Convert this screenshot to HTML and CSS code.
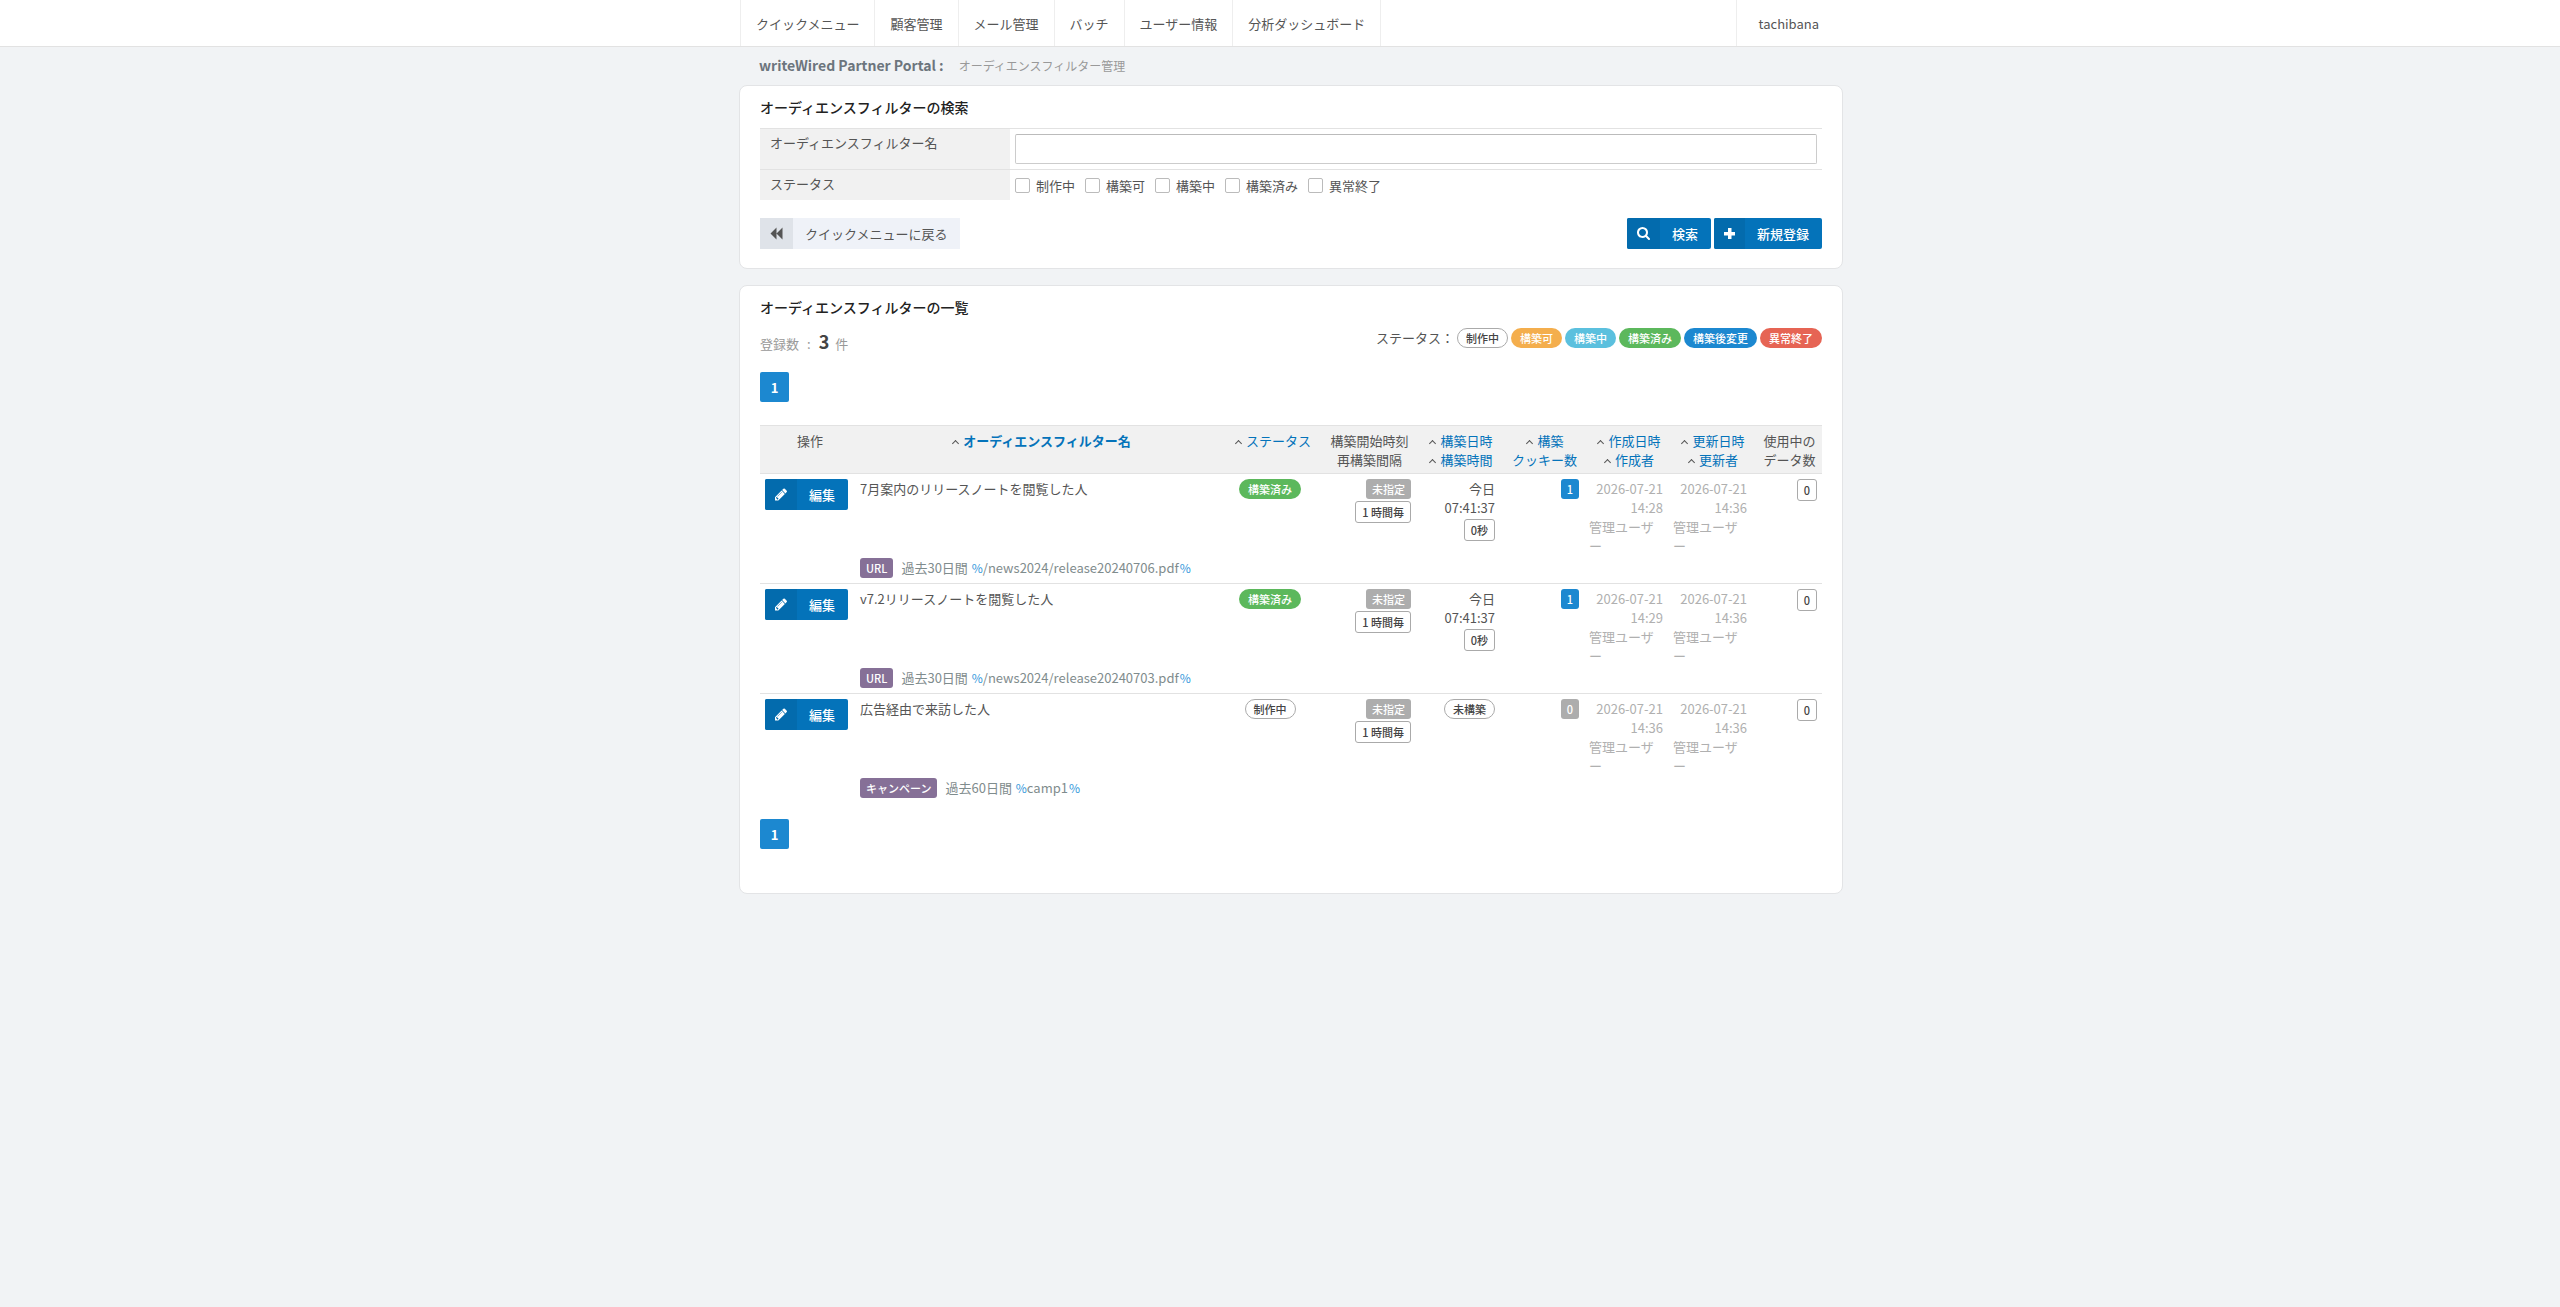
FILE: index.html
```
<!DOCTYPE html>
<html lang="ja">
<head>
  <meta charset="UTF-8">
  <meta name="viewport" content="width=device-width, initial-scale=1.0">
  <title>オーディエンスフィルター管理</title>
  <link rel="stylesheet" href="styles.css">
</head>
<body>
  <!-- icons -->
  <svg class="defs" width="0" height="0">
    <symbol id="i-search" viewBox="64 128 1664 1664"><path d="M1216 832q0-185-131.500-316.500t-316.500-131.500-316.500 131.500-131.500 316.500 131.500 316.500 316.500 131.500 316.500-131.500 131.500-316.500zm512 832q0 52-38 90t-90 38q-54 0-90-38l-343-342q-179 124-399 124-143 0-273.500-55.500t-225-150-150-225-55.500-273.500 55.500-273.500 150-225 225-150 273.500-55.500 273.500 55.500 225 150 150 225 55.500 273.500q0 220-124 399l343 343q37 37 37 90z"/></symbol>
    <symbol id="i-pencil" viewBox="128 149 1516 1516"><path d="M491 1536l91-91-235-235-91 91v107h128v128h107zm523-928q0-22-22-22-10 0-17 7l-542 542q-7 7-7 17 0 22 22 22 10 0 17-7l542-542q7-7 7-17zm-54-192l416 416-832 832h-416v-416zm683 96q0 53-37 90l-166 166-416-416 166-165q36-38 90-38 53 0 91 38l235 234q37 39 37 91z"/></symbol>
    <symbol id="i-plus" viewBox="0 0 11 11"><path d="M4 0h3.500v4H11v3.500H7.500V11H4V7.500H0V4h4z"/></symbol>
    <symbol id="i-back" viewBox="0 0 13 13"><path d="M6.500 .5v12L.5 6.500zM12.500 .5v12L6.500 6.500z"/></symbol>
  </svg>

  <header class="header">
    <div class="container header-inner">
      <nav class="nav">
        <a href="#">クイックメニュー</a>
        <a href="#">顧客管理</a>
        <a href="#">メール管理</a>
        <a href="#">バッチ</a>
        <a href="#">ユーザー情報</a>
        <a href="#">分析ダッシュボード</a>
      </nav>
      <a class="user" href="#">tachibana</a>
    </div>
  </header>

  <main class="container">
    <div class="page-title">
      <h1>writeWired Partner Portal :</h1>
      <span>オーディエンスフィルター管理</span>
    </div>

    <section class="card">
      <h2>オーディエンスフィルターの検索</h2>
      <form>
        <div class="form-row">
          <label class="form-label" for="filterName">オーディエンスフィルター名</label>
          <div class="form-field">
            <input type="text" id="filterName">
          </div>
        </div>
        <div class="form-row">
          <div class="form-label">ステータス</div>
          <div class="form-field checks">
            <label><input type="checkbox">制作中</label>
            <label><input type="checkbox">構築可</label>
            <label><input type="checkbox">構築中</label>
            <label><input type="checkbox">構築済み</label>
            <label><input type="checkbox">異常終了</label>
          </div>
        </div>
        <div class="actions">
          <button type="button" class="btn btn-back"><span class="icon"><svg><use href="#i-back"/></svg></span><span class="text">クイックメニューに戻る</span></button>
          <div class="actions-right">
            <button type="button" class="btn"><span class="icon"><svg><use href="#i-search"/></svg></span><span class="text">検索</span></button>
            <button type="button" class="btn btn-add"><span class="icon"><svg><use href="#i-plus"/></svg></span><span class="text">新規登録</span></button>
          </div>
        </div>
      </form>
    </section>

    <section class="card card-list">
      <h2>オーディエンスフィルターの一覧</h2>
      <div class="summary">
        <div class="count">登録数<span class="colon">:</span><strong>3</strong>件</div>
        <div class="legend">
          <span>ステータス：</span>
          <span class="pill pill-line">制作中</span>
          <span class="pill orange">構築可</span>
          <span class="pill cyan">構築中</span>
          <span class="pill green">構築済み</span>
          <span class="pill blue">構築後変更</span>
          <span class="pill red">異常終了</span>
        </div>
      </div>

      <div class="pager"><a href="#">1</a></div>

      <table class="list">
        <colgroup>
          <col class="c-action"><col><col class="c-status"><col class="c-start"><col class="c-date"><col class="c-date"><col class="c-date"><col class="c-date"><col class="c-use">
        </colgroup>
        <thead>
          <tr>
            <th>操作</th>
            <th><i class="caret"></i><a class="current" href="#">オーディエンスフィルター名</a></th>
            <th><i class="caret"></i><a href="#">ステータス</a></th>
            <th>構築開始時刻<br>再構築間隔</th>
            <th><i class="caret"></i><a href="#">構築日時</a><br><i class="caret"></i><a href="#">構築時間</a></th>
            <th><i class="caret"></i><a href="#">構築<br>クッキー数</a></th>
            <th><i class="caret"></i><a href="#">作成日時</a><br><i class="caret"></i><a href="#">作成者</a></th>
            <th><i class="caret"></i><a href="#">更新日時</a><br><i class="caret"></i><a href="#">更新者</a></th>
            <th>使用中の<br>データ数</th>
          </tr>
        </thead>
        <tbody>
          <tr>
            <td rowspan="2"><button type="button" class="btn btn-edit"><span class="icon"><svg><use href="#i-pencil"/></svg></span><span class="text">編集</span></button></td>
            <td>7月案内のリリースノートを閲覧した人</td>
            <td class="center"><span class="pill green">構築済み</span></td>
            <td><div class="stack"><span class="tag gray">未指定</span><span class="tag tag-line">1 時間毎</span></div></td>
            <td><div class="stack"><span>今日<br>07:41:37</span><span class="tag tag-line">0秒</span></div></td>
            <td><div class="stack"><span class="tag blue">1</span></div></td>
            <td class="muted"><div class="when">2026-07-21 14:28</div>管理ユーザー</td>
            <td class="muted"><div class="when">2026-07-21 14:36</div>管理ユーザー</td>
            <td><div class="stack"><span class="tag tag-line">0</span></div></td>
          </tr>
          <tr class="detail">
            <td colspan="8"><span class="tag purple">URL</span>過去30日間 <em>%</em>/news2024/release20240706.pdf<em>%</em></td>
          </tr>
          <tr>
            <td rowspan="2"><button type="button" class="btn btn-edit"><span class="icon"><svg><use href="#i-pencil"/></svg></span><span class="text">編集</span></button></td>
            <td>v7.2リリースノートを閲覧した人</td>
            <td class="center"><span class="pill green">構築済み</span></td>
            <td><div class="stack"><span class="tag gray">未指定</span><span class="tag tag-line">1 時間毎</span></div></td>
            <td><div class="stack"><span>今日<br>07:41:37</span><span class="tag tag-line">0秒</span></div></td>
            <td><div class="stack"><span class="tag blue">1</span></div></td>
            <td class="muted"><div class="when">2026-07-21 14:29</div>管理ユーザー</td>
            <td class="muted"><div class="when">2026-07-21 14:36</div>管理ユーザー</td>
            <td><div class="stack"><span class="tag tag-line">0</span></div></td>
          </tr>
          <tr class="detail">
            <td colspan="8"><span class="tag purple">URL</span>過去30日間 <em>%</em>/news2024/release20240703.pdf<em>%</em></td>
          </tr>
          <tr>
            <td rowspan="2"><button type="button" class="btn btn-edit"><span class="icon"><svg><use href="#i-pencil"/></svg></span><span class="text">編集</span></button></td>
            <td>広告経由で来訪した人</td>
            <td class="center"><span class="pill pill-line">制作中</span></td>
            <td><div class="stack"><span class="tag gray">未指定</span><span class="tag tag-line">1 時間毎</span></div></td>
            <td><div class="stack"><span class="pill pill-line">未構築</span></div></td>
            <td><div class="stack"><span class="tag gray">0</span></div></td>
            <td class="muted"><div class="when">2026-07-21 14:36</div>管理ユーザー</td>
            <td class="muted"><div class="when">2026-07-21 14:36</div>管理ユーザー</td>
            <td><div class="stack"><span class="tag tag-line">0</span></div></td>
          </tr>
          <tr class="detail">
            <td colspan="8"><span class="tag purple">キャンペーン</span>過去60日間 <em>%</em>camp1<em>%</em></td>
          </tr>
        </tbody>
      </table>

      <div class="pager"><a href="#">1</a></div>
    </section>
  </main>
</body>
</html>
```
FILE: styles.css
```
* {
  box-sizing: border-box;
}
body {
  margin: 0;
  background: #f1f3f5;
  color: #555;
  font-family: "Noto Sans CJK JP", sans-serif;
  font-size: 13px;
  line-height: 19px;
}
a {
  color: #0473ba;
  text-decoration: none;
}
button, input {
  font-family: inherit;
  font-size: 13px;
}
.defs {
  position: absolute;
}
.container {
  max-width: 1126px;
  margin: 0 auto;
  padding-left: 22px;
}

/* header */
.header {
  background: #fff;
  border-bottom: 1px solid #e2e2e2;
}
.header-inner {
  display: flex;
  justify-content: space-between;
}
.header a {
  display: block;
  height: 46px;
  line-height: 48px;
  color: #555;
}
.nav {
  display: flex;
  border-right: 1px solid #eee;
  margin-left: 1px;
}
.nav a {
  padding: 0 15px;
  border-left: 1px solid #eee;
}
.header .user {
  padding: 0 24px 0 22px;
  border-left: 1px solid #eee;
}

.page-title {
  display: flex;
  align-items: center;
  gap: 15px;
  height: 36px;
  margin-bottom: 2px;
  padding-left: 20px;
  color: #999;
  font-size: 12px;
}
.page-title h1 {
  margin: 0;
  color: #6c757d;
  font-size: 14px;
  font-weight: bold;
}

/* cards */
.card {
  margin-bottom: 16px;
  padding: 11px 20px 19px;
  background: #fff;
  border: 1px solid #e3e4e6;
  border-radius: 8px;
}
.card-list {
  padding-bottom: 44px;
}
.card h2 {
  margin: 0 0 11px;
  color: #222;
  font-size: 14px;
  font-weight: 500;
  line-height: 20px;
}

/* search form */
.form-row {
  display: flex;
  border-top: 1px solid #e2e2e2;
}
.form-label {
  width: 250px;
  padding: 4px 10px;
  background: #f1f1f1;
}
.form-field {
  flex: 1;
  padding: 5px;
}
input[type="text"] {
  display: block;
  width: 100%;
  height: 30px;
  border: 1px solid #ccc;
  border-top-color: #bbb;
  border-radius: 2px;
}
.checks {
  display: flex;
  gap: 10px;
  padding: 6px 5px 5px;
}
.checks label {
  display: flex;
  align-items: center;
  gap: 6px;
}
.checks input {
  appearance: none;
  width: 15px;
  height: 15px;
  margin: 0;
  border: 1px solid #bbb;
  border-radius: 2px;
  background: #fff;
}
.actions {
  display: flex;
  justify-content: space-between;
  margin-top: 18px;
}
.actions-right {
  display: flex;
  gap: 3px;
}

/* buttons */
.btn {
  display: inline-flex;
  height: 31px;
  padding: 0;
  border: none;
  border-radius: 2px;
  background: #0473ba;
  color: #fff;
  font-weight: 500;
  line-height: 32px;
  overflow: hidden;
  cursor: pointer;
}
.btn .icon {
  display: flex;
  align-items: center;
  padding: 0 10px;
  background: #036bad;
}
.btn .icon svg {
  width: 13px;
  height: 13px;
  fill: currentColor;
}
.btn-add .icon svg {
  width: 11px;
}
.btn-edit .icon svg {
  width: 12px;
}
.btn .text {
  padding: 0 13px 0 12px;
}
.btn-back {
  border-radius: 0;
  background: #eff2f8;
  color: #555;
  font-weight: normal;
}
.btn-back .icon {
  background: #dfe3e9;
}

/* list */
.summary {
  display: flex;
  justify-content: space-between;
  height: 44px;
}
.count {
  padding-top: 4px;
  color: #999;
}
.count .colon {
  margin: 0 8px;
}
.count strong {
  margin-right: 6px;
  color: #444;
  font-size: 18px;
}
.legend {
  display: flex;
  align-items: flex-start;
  gap: 3px;
}
.pill, .tag {
  display: inline-block;
  height: 20px;
  padding: 0 9px;
  border-radius: 10px;
  color: #fff;
  font-size: 11px;
  font-weight: 500;
  line-height: 21px;
  white-space: nowrap;
}
.pill-line {
  padding: 0 8px;
  border: 1px solid #aaa;
  background: #fff;
  color: #444;
  line-height: 19px;
}
.tag {
  padding: 0 6px;
  border-radius: 3px;
}
.tag-line {
  height: 22px;
  border: 1px solid #aaa;
  background: #fff;
  color: #444;
}
.orange { background: #f4ae4d; }
.cyan { background: #5bc0de; }
.green { background: #5cb85c; }
.blue { background: #1c88d0; }
.red { background: #e66454; }
.gray { background: #adadad; }
.purple { background: #867097; }

.pager a {
  display: block;
  width: 29px;
  height: 30px;
  border-radius: 2px;
  background: #1c88d0;
  color: #fff;
  font-weight: bold;
  line-height: 31px;
  text-align: center;
}
.list {
  width: 100%;
  margin: 23px 0 16px;
  border-collapse: separate;
  border-spacing: 0;
  table-layout: fixed;
}
.c-action { width: 95px; }
.c-status { width: 96px; }
.c-start { width: 98px; }
.c-date { width: 84px; }
.c-use { width: 70px; }
.list th {
  padding: 5px 5px 4px 10px;
  border-top: 1px solid #e2e2e2;
  border-bottom: 1px solid #e2e2e2;
  background: #f1f1f1;
  font-weight: normal;
  vertical-align: top;
}
.list td {
  padding: 5px 5px 0;
  vertical-align: top;
}
.list td[rowspan], .list .detail td {
  border-bottom: 1px solid #e2e2e2;
}
.list .detail td {
  padding: 3px 5px 5px;
  color: #7f8c8d;
  line-height: 20px;
}
.list .detail .tag {
  margin-right: 8px;
  vertical-align: top;
}
.list .detail:last-child td, .list tr:nth-last-child(2) td[rowspan] {
  border-bottom: none;
}
.list em {
  margin-left: 1px;
  color: #3498db;
  font-size: 12px;
  font-style: normal;
}
.list .current {
  font-weight: bold;
}
.list .center {
  text-align: center;
}
.center .pill {
  vertical-align: top;
}
.list .muted {
  color: #b0b0b0;
}
.when {
  text-align: right;
}
.stack {
  display: flex;
  flex-direction: column;
  align-items: flex-end;
  gap: 2px;
  text-align: right;
}
.caret {
  display: inline-block;
  width: 5px;
  height: 5px;
  margin: 0 5px 0 2px;
  border-top: 1px solid #555;
  border-left: 1px solid #555;
  transform: rotate(45deg);
}
```
